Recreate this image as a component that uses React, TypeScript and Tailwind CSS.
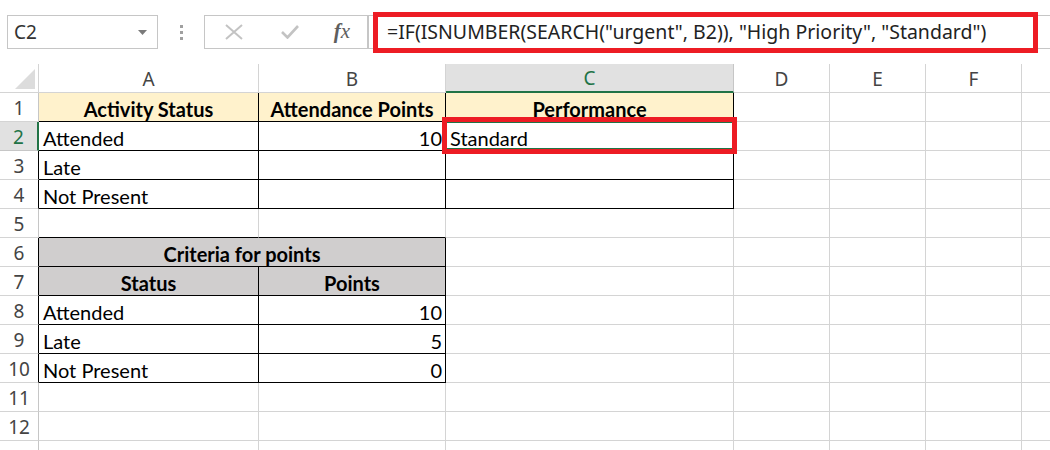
type Cell = {
    text?: string;
    align?: "left" | "right" | "center";
    bold?: boolean;
    bg?: string;
    right?: string;
    bottom?: string;
    span?: number;
};

const COLS = ["A", "B", "C", "D", "E", "F", "G"];
const WIDTHS = ["w-[220px]", "w-[187px]", "w-[288px]", "w-[96px]", "w-[96px]", "w-[96px]", "w-[96px]"];

const GRID = "border-[#d4d4d4]";
const BLACK = "border-black";

const cellFont = { fontFamily: "Lato, 'Open Sans', sans-serif" };
const uiFont = { fontFamily: "'Noto Sans', 'Open Sans', sans-serif" };

// cells A..C of each row; the rest of the row is plain grid
const rows: { n: number; cells: Cell[]; head?: string }[] = [
    {
        n: 1,
        head: GRID,
        cells: [
            { text: "Activity Status", bold: true, align: "center", bg: "bg-[#fff2cc]", right: BLACK, bottom: BLACK },
            { text: "Attendance Points", bold: true, align: "center", bg: "bg-[#fff2cc]", right: BLACK, bottom: BLACK },
            { text: "Performance", bold: true, align: "center", bg: "bg-[#fff2cc]", right: BLACK, bottom: BLACK },
        ],
    },
    {
        n: 2,
        cells: [
            { text: "Attended", right: BLACK, bottom: BLACK },
            { text: "10", align: "right", right: BLACK, bottom: BLACK },
            { text: "Standard", right: BLACK, bottom: BLACK },
        ],
    },
    {
        n: 3,
        head: BLACK,
        cells: [
            { text: "Late", right: BLACK, bottom: BLACK },
            { right: BLACK, bottom: BLACK },
            { right: BLACK, bottom: BLACK },
        ],
    },
    {
        n: 4,
        head: BLACK,
        cells: [
            { text: "Not Present", right: BLACK, bottom: BLACK },
            { right: BLACK, bottom: BLACK },
            { right: BLACK, bottom: BLACK },
        ],
    },
    { n: 5, head: GRID, cells: [{ bottom: BLACK }, { bottom: BLACK }] },
    {
        n: 6,
        head: BLACK,
        cells: [{ text: "Criteria for points", bold: true, align: "center", bg: "bg-[#d0cece]", span: 2, right: BLACK, bottom: BLACK }],
    },
    {
        n: 7,
        head: BLACK,
        cells: [
            { text: "Status", bold: true, align: "center", bg: "bg-[#d0cece]", right: BLACK, bottom: BLACK },
            { text: "Points", bold: true, align: "center", bg: "bg-[#d0cece]", right: BLACK, bottom: BLACK },
        ],
    },
    {
        n: 8,
        head: BLACK,
        cells: [
            { text: "Attended", right: BLACK, bottom: BLACK },
            { text: "10", align: "right", right: BLACK, bottom: BLACK },
        ],
    },
    {
        n: 9,
        head: BLACK,
        cells: [
            { text: "Late", right: BLACK, bottom: BLACK },
            { text: "5", align: "right", right: BLACK, bottom: BLACK },
        ],
    },
    {
        n: 10,
        head: BLACK,
        cells: [
            { text: "Not Present", right: BLACK, bottom: BLACK },
            { text: "0", align: "right", right: BLACK, bottom: BLACK },
        ],
    },
    { n: 11, head: GRID, cells: [] },
    { n: 12, head: GRID, cells: [] },
    { n: 13, head: GRID, cells: [] },
];

const alignClass = (a?: string) =>
    a === "right" ? "justify-end pr-[3px]" : a === "center" ? "justify-center" : "justify-start pl-[4px]";

const Row = ({ n, cells, head }: { n: number; cells: Cell[]; head?: string }) => {
    const selected = n === 2;
    const filled: (Cell & { col: number })[] = [];
    let col = 0;
    for (const c of cells) {
        filled.push({ ...c, col });
        col += c.span ?? 1;
    }
    while (col < COLS.length) {
        filled.push({ col });
        col += 1;
    }

    return (
        <div className="flex h-[29px] shrink-0">
            <div
                className={`flex w-[39px] shrink-0 items-center justify-center border-b pt-[2px] ${
                    selected
                        ? "border-r-2 border-r-[#217346] border-b-[#c6c6c6] bg-[#e1e1e1] text-[#217346]"
                        : `border-r border-b-[#d4d4d4] ${head === BLACK ? "border-r-black" : "border-r-[#c6c6c6]"} text-[#444]`
                } text-[19px]`}
                style={uiFont}
            >
                {n < 13 ? n : ""}
            </div>
            {filled.map((c) => {
                const isC2 = selected && c.col === 2;
                const width = c.span === 2 ? "w-[407px]" : WIDTHS[c.col];
                return (
                    <div
                        key={c.col}
                        className={`relative flex shrink-0 items-center border-r border-b pt-[3px] ${width} ${alignClass(c.align)} ${
                            c.bg ?? "bg-white"
                        } ${c.right ?? "border-r-[#d4d4d4]"} ${c.bottom ?? "border-b-[#d4d4d4]"} ${
                            c.bold ? "font-bold" : ""
                        } text-[20px] text-black`}
                        style={cellFont}
                    >
                        {c.text}
                        {isC2 && (
                            <>
                                <div className="pointer-events-none absolute -left-[1px] -top-[1px] z-10 h-[29px] w-[289px] border-2 border-[#217346]" />
                                <div className="pointer-events-none absolute left-[-4px] top-[-5px] z-20 h-[37px] w-[295px] border-[5px] border-[#ed1c24]" />
                            </>
                        )}
                    </div>
                );
            })}
        </div>
    );
};

const FormulaBar = () => (
    <div className="flex h-[64px] shrink-0 items-start pl-[7px] pt-[15px]">
        <div
            className="flex h-[34px] w-[151px] shrink-0 items-center justify-between border border-[#c6c6c6] pl-[6px] pr-[10px] text-[19px] text-[#333]"
            style={uiFont}
        >
            <span>C2</span>
            <svg width="9" height="5" viewBox="0 0 9 5">
                <path d="M0 0 L9 0 L4.5 5 Z" fill="#7a7a7a" />
            </svg>
        </div>
        <div className="flex h-[34px] w-[46px] shrink-0 flex-col items-center justify-center gap-[3px]">
            <span className="h-[3px] w-[3px] bg-[#a0a0a0]" />
            <span className="h-[3px] w-[3px] bg-[#a0a0a0]" />
            <span className="h-[3px] w-[3px] bg-[#a0a0a0]" />
        </div>
        <div className="flex h-[34px] w-[164px] shrink-0 items-center border border-[#c6c6c6]">
            <div className="flex w-[58px] justify-center">
                <svg width="18" height="16" viewBox="0 0 18 16">
                    <path d="M1 1 L17 15 M17 1 L1 15" stroke="#c3c3c3" strokeWidth="2" />
                </svg>
            </div>
            <div className="flex w-[54px] justify-center">
                <svg width="18" height="14" viewBox="0 0 18 14">
                    <path d="M1 7 L6.5 12.5 L17 1" stroke="#c3c3c3" strokeWidth="2.6" fill="none" />
                </svg>
            </div>
            <div
                className="flex w-[50px] justify-center text-[21px] italic text-[#5e5e5e]"
                style={{ fontFamily: "'Liberation Serif', serif" }}
            >
                <span className="font-bold">f</span>
                <span>x</span>
            </div>
        </div>
        <div
            className="relative flex h-[34px] flex-1 items-center border border-r-0 border-[#c6c6c6] pl-[18px] text-[19.5px] text-[#222]"
            style={uiFont}
        >
            =IF(ISNUMBER(SEARCH("urgent", B2)), "High Priority", "Standard")
            <div className="pointer-events-none absolute bottom-[-5px] left-[4px] right-[12px] top-[-4px] border-[5px] border-[#ed1c24]" />
        </div>
    </div>
);

const ColumnHeaders = () => (
    <div className="flex h-[29px] shrink-0">
        <div className="flex w-[39px] shrink-0 items-end justify-end border-r border-b border-[#d4d4d4] pb-[3px] pr-[3px]">
            <svg width="20" height="20" viewBox="0 0 20 20">
                <path d="M20 0 L20 20 L0 20 Z" fill="#dcdcdc" />
            </svg>
        </div>
        {COLS.map((c, i) => (
            <div
                key={c}
                className={`flex shrink-0 items-center justify-center pt-[2px] text-[19px] ${WIDTHS[i]} ${
                    c === "C"
                        ? "border-r border-r-[#c6c6c6] border-b-2 border-b-[#217346] bg-[#e1e1e1] text-[#217346]"
                        : "border-r border-b border-[#d4d4d4] bg-white text-[#444]"
                }`}
                style={uiFont}
            >
                {c === "G" ? "" : c}
            </div>
        ))}
    </div>
);

export default function App() {
    return (
        <div className="flex h-[450px] w-[1050px] flex-col overflow-hidden bg-white">
            <FormulaBar />
            <ColumnHeaders />
            {rows.map((r) => (
                <Row key={r.n} n={r.n} cells={r.cells} head={r.head} />
            ))}
        </div>
    );
}
